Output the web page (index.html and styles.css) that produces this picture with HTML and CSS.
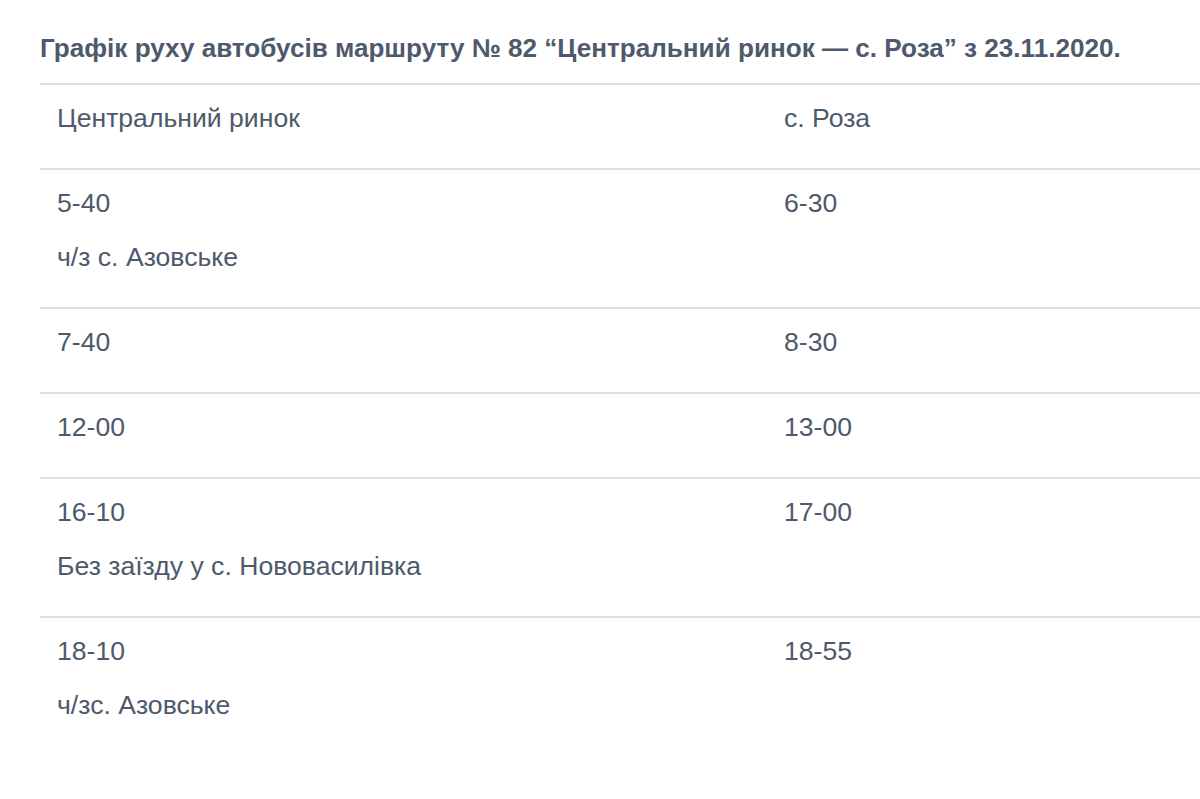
FILE: index.html
```html
<!DOCTYPE html>
<html lang="uk">
<head>
<meta charset="utf-8">
<link rel="stylesheet" href="styles.css">
</head>
<body>
<main class="page">
  <h2 class="title">Графік руху автобусів маршруту № 82 “Центральний ринок — с. Роза” з 23.11.2020.</h2>
  <div class="table">
    <div class="row">
      <div class="cell"><p>Центральний ринок</p></div>
      <div class="cell"><p>с. Роза</p></div>
    </div>
    <div class="row">
      <div class="cell"><p>5-40</p><p>ч/з с. Азовське</p></div>
      <div class="cell"><p>6-30</p></div>
    </div>
    <div class="row">
      <div class="cell"><p>7-40</p></div>
      <div class="cell"><p>8-30</p></div>
    </div>
    <div class="row">
      <div class="cell"><p>12-00</p></div>
      <div class="cell"><p>13-00</p></div>
    </div>
    <div class="row">
      <div class="cell"><p>16-10</p><p>Без заїзду у с. Нововасилівка</p></div>
      <div class="cell"><p>17-00</p></div>
    </div>
    <div class="row">
      <div class="cell"><p>18-10</p><p>ч/зс. Азовське</p></div>
      <div class="cell"><p>18-55</p></div>
    </div>
  </div>
</main>
</body>
</html>
```
FILE: styles.css
```css
html, body {
  margin: 0;
  padding: 0;
  background: #fff;
}
body {
  font-family: "Liberation Sans", Arial, sans-serif;
  color: #4e5a6b;
  overflow: hidden;
}
.page {
  padding: 32px 0 0 40px;
}
.title {
  margin: 0;
  font-size: 26.1px;
  line-height: 33px;
  font-weight: bold;
  color: #4e5a6b;
  padding-bottom: 18px;
}
.table {
  width: 1160px;
}
.row {
  display: grid;
  grid-template-columns: 727px 1fr;
  border-top: 2px solid #e0e0e0;
}
.cell {
  padding: 17px 17px 12px;
}
.cell p {
  margin: 0 0 21px;
  font-size: 26.6px;
  line-height: 33px;
  color: #4e5a6b;
}
```
